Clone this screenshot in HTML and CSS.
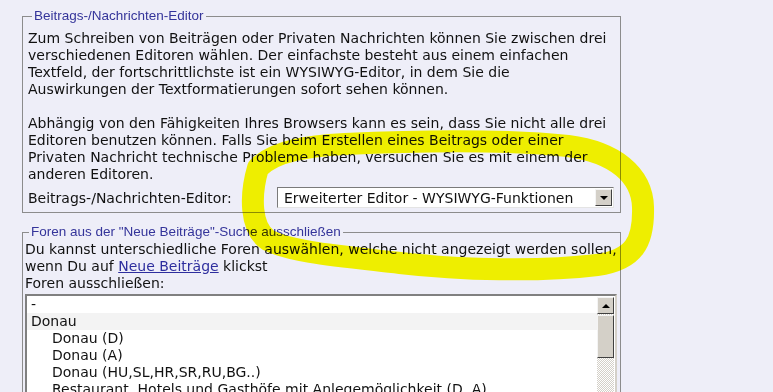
FILE: index.html
```html
<!DOCTYPE html>
<html>
<head>
  <title>Profil - Editor</title>
  <link rel="stylesheet" href="styles.css">
</head>
<body>
  <div class="page">
    <fieldset class="box box-editor">
      <legend>Beitrags-/Nachrichten-Editor</legend>
      <p>Zum Schreiben von Beiträgen oder Privaten Nachrichten können Sie zwischen drei<br>
      verschiedenen Editoren wählen. Der einfachste besteht aus einem einfachen<br>
      Textfeld, der fortschrittlichste ist ein WYSIWYG-Editor, in dem Sie die<br>
      Auswirkungen der Textformatierungen sofort sehen können.</p>
      <p>Abhängig von den Fähigkeiten Ihres Browsers kann es sein, dass Sie nicht alle drei<br>
      Editoren benutzen können. Falls Sie beim Erstellen eines Beitrags oder einer<br>
      Privaten Nachricht technische Probleme haben, versuchen Sie es mit einem der<br>
      anderen Editoren.</p>
      <div class="row">
        <label>Beitrags-/Nachrichten-Editor:</label>
        <div class="combo">
          <span class="combo-text">Erweiterter Editor - WYSIWYG-Funktionen</span>
          <span class="combo-btn"><span class="arrow-down"></span></span>
        </div>
      </div>
    </fieldset>

    <fieldset class="box box-forums">
      <legend>Foren aus der "Neue Beiträge"-Suche ausschließen</legend>
      <p>Du kannst unterschiedliche Foren auswählen, welche nicht angezeigt werden sollen,<br>
      wenn Du auf <a href="#">Neue Beiträge</a> klickst<br>
      Foren ausschließen:</p>
      <div class="listbox">
        <ul class="options">
          <li>-</li>
          <li class="hover">Donau</li>
          <li class="sub">Donau (D)</li>
          <li class="sub">Donau (A)</li>
          <li class="sub">Donau (HU,SL,HR,SR,RU,BG..)</li>
          <li class="sub">Restaurant, Hotels und Gasthöfe mit Anlegemöglichkeit (D, A)</li>
        </ul>
        <div class="scrollbar">
          <span class="sb-btn"><span class="arrow-up"></span></span>
          <span class="sb-thumb"></span>
        </div>
      </div>
    </fieldset>
  </div>

  <!-- marker circle drawn over the screenshot -->
  <svg class="marker" width="773" height="392" viewBox="0 0 773 392">
    <path d="M 258 168 C 275 150, 310 146, 345 144 C 430 140, 510 140, 568 146 C 615 152, 642 175, 643 207 C 644 242, 634 260, 597 265 C 540 272, 460 270, 400 263 C 340 256, 290 252, 268 240 C 250 228, 250 195, 258 168" />
  </svg>
</body>
</html>
```

FILE: styles.css
```css
body {
  margin: 0;
  background-color: #eeeef8;
  font-family: Verdana, "DejaVu Sans", sans-serif;
  font-size: 14px;
  color: #111;
  position: relative;
  overflow: hidden;
  height: 392px;
}

.page {
  padding: 8px 0 0 22px;
  width: 599px;
}

.box {
  margin: 0;
  border: 1px solid #8c8c8c;
  padding: 0 5px 4px 5px;
}

.box legend {
  font-family: "Liberation Sans", Arial, sans-serif;
  font-size: 13.5px;
  line-height: 16px;
  color: #34349a;
  padding: 0 2px;
  margin-left: 4px;
}

.box p {
  margin: 0;
  line-height: 17px;
  white-space: nowrap;
}

.box-editor p {
  margin-top: 6px;
}

.box-editor p + p {
  margin-top: 17px;
}

.box-forums {
  margin-top: 11px;
  padding: 0 3px 0 2px;
}

.box-forums p {
  margin-top: 1px;
}

.row {
  display: flex;
  justify-content: space-between;
  align-items: center;
  margin-top: 4px;
}

.combo {
  width: 335px;
  height: 19px;
  background: #fff;
  border: 1px solid;
  border-color: #7a7a7a #e4e4e4 #e4e4e4 #7a7a7a;
  display: flex;
  align-items: center;
  justify-content: space-between;
  margin-right: 1px;
}

.combo-text {
  padding-left: 6px;
}

.combo-btn {
  width: 15px;
  height: 15px;
  margin-right: 1px;
  background: #d4d0c8;
  border: 1px solid;
  border-color: #f4f4f4 #404040 #404040 #f4f4f4;
  display: flex;
  align-items: center;
  justify-content: center;
}

.arrow-down {
  border-left: 4px solid transparent;
  border-right: 4px solid transparent;
  border-top: 4px solid #000;
}

.arrow-up {
  border-left: 4px solid transparent;
  border-right: 4px solid transparent;
  border-bottom: 4px solid #000;
}

a {
  color: #2e2e9e;
}

.listbox {
  margin-top: 2px;
  height: 120px;
  background: #fff;
  border: 2px solid;
  border-color: #808080 #d4d0c8 #d4d0c8 #808080;
  display: flex;
}

.options {
  list-style: none;
  margin: 0;
  padding: 0;
  flex: 1;
}

.options li {
  line-height: 17px;
  padding-left: 4px;
  white-space: nowrap;
}

.options li.hover {
  background: #f3f3f3;
}

.options li.sub {
  padding-left: 25px;
}

.scrollbar {
  width: 17px;
  margin: 1px 1px 0 0;
  display: flex;
  flex-direction: column;
  background: repeating-conic-gradient(#d4d0c8 0 25%, #fff 0 50%) 0 0 / 2px 2px;
}

.sb-btn {
  height: 15px;
  background: #d4d0c8;
  border: 1px solid;
  border-color: #f4f4f4 #404040 #404040 #f4f4f4;
  display: flex;
  align-items: center;
  justify-content: center;
}

.sb-thumb {
  height: 41px;
  margin-top: 1px;
  background: #d4d0c8;
  border: 1px solid;
  border-color: #f4f4f4 #404040 #404040 #f4f4f4;
}

.marker {
  position: absolute;
  left: 0;
  top: 0;
  pointer-events: none;
  mix-blend-mode: multiply;
}

.marker path {
  fill: none;
  stroke: #ffff00;
  stroke-width: 22;
  stroke-linecap: round;
}
```
